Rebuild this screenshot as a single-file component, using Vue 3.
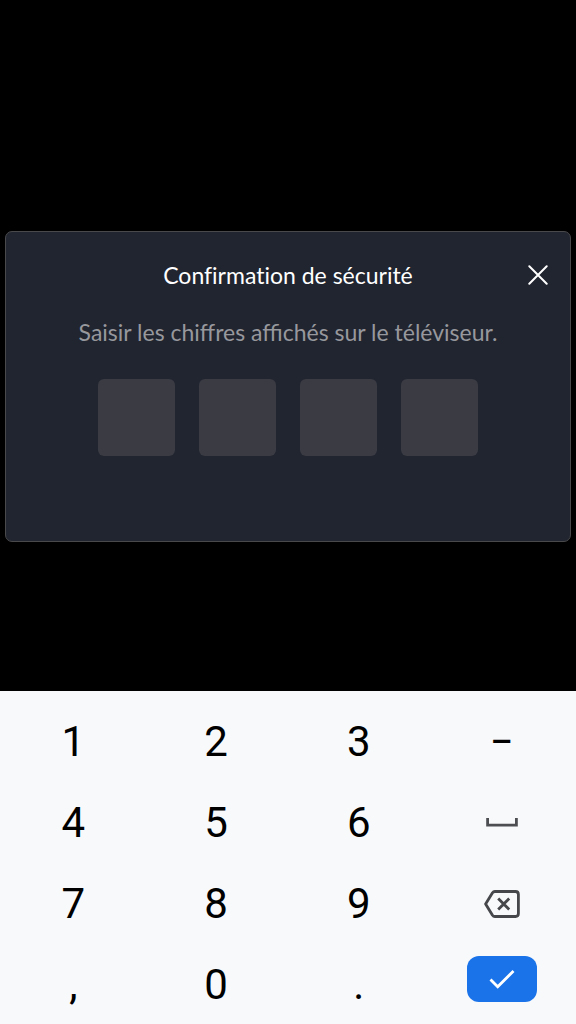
<template>
  <div class="screen">
    <main class="screen__stage">
      <section class="dialog" role="dialog" aria-labelledby="dialog-title">
        <header class="dialog__header">
          <h1 id="dialog-title" class="dialog__title">Confirmation de sécurité</h1>
          <button type="button" class="dialog__close" aria-label="Fermer" @click="clearCode">
            <svg width="20" height="20" viewBox="0 0 20 20" fill="none" stroke="#fff" stroke-width="2" stroke-linecap="round">
              <path d="M1.3 1.3 18.7 18.7M18.7 1.3 1.3 18.7" />
            </svg>
          </button>
        </header>
        <p class="dialog__text">Saisir les chiffres affichés sur le téléviseur.</p>
        <div class="dialog__code">
          <input
              v-for="(digit, index) in code"
              :key="index"
              type="text"
              inputmode="none"
              maxlength="1"
              readonly
              class="dialog__digit"
              :value="digit"
              :aria-label="`Chiffre ${index + 1}`"
          >
        </div>
      </section>
    </main>

    <div class="keyboard">
      <template v-for="key in keys" :key="key">
        <button v-if="key === 'space'" type="button" class="keyboard__key" aria-label="Espace">
          <svg width="32" height="10" viewBox="0 0 32 10" fill="none" stroke="#4d4e52" stroke-width="2.8">
            <path d="M1.6 0V7.2H30.4V0" />
          </svg>
        </button>
        <button v-else-if="key === 'delete'" type="button" class="keyboard__key" aria-label="Effacer" @click="removeDigit">
          <svg width="36" height="28" viewBox="0 0 36 28" fill="none" stroke="#46474a" stroke-width="2.8" stroke-linejoin="round">
            <path d="M10.8 1.5H31.5Q34.4 1.5 34.4 4.4V23.6Q34.4 26.5 31.5 26.5H10.8Q9.4 26.5 8.5 25.2L1.6 14 8.5 2.8Q9.4 1.5 10.8 1.5Z" />
            <path d="M14.2 8.5 25.2 19.5M25.2 8.5 14.2 19.5" />
          </svg>
        </button>
        <button v-else-if="key === 'enter'" type="button" class="keyboard__key keyboard__key--enter" aria-label="Valider">
          <span class="keyboard__enter">
            <svg width="26" height="20" viewBox="0 0 26 20" fill="none" stroke="#fff" stroke-width="2.8">
              <path d="M1.5 10.5 8.7 17.7 24.5 1.9" />
            </svg>
          </span>
        </button>
        <button v-else type="button" class="keyboard__key" @click="addDigit(key)">{{ key }}</button>
      </template>
    </div>
  </div>
</template>

<script setup>
import { ref } from 'vue';

const keys = ['1', '2', '3', '−', '4', '5', '6', 'space', '7', '8', '9', 'delete', ',', '0', '.', 'enter'];
const code = ref(['', '', '', '']);

const addDigit = (key) => {
  const index = code.value.indexOf('');
  if (/\d/.test(key) && index !== -1) {
    code.value[index] = key;
  }
};

const removeDigit = () => {
  const index = code.value.findLastIndex((digit) => digit !== '');
  if (index !== -1) {
    code.value[index] = '';
  }
};

const clearCode = () => {
  code.value = ['', '', '', ''];
};
</script>

<style>
body {
  margin: 0;
  background: #000;
}
</style>

<style scoped>
.screen {
  display: flex;
  flex-direction: column;
  min-height: 100vh;
  background: #000;
  font-family: Lato, "Noto Sans", sans-serif;
}

.screen__stage {
  display: flex;
  flex: 1;
  align-items: center;
  padding: 82px 5px 0;
}

.dialog {
  flex: 1;
  padding: 23px 20px 85px;
  border: 1px solid #49494c;
  border-radius: 7px;
  background: #21252f;
}

.dialog__header {
  display: grid;
  grid-template-columns: 40px 1fr 40px;
  align-items: center;
}

.dialog__title {
  grid-column: 2;
  margin: 0;
  color: #fff;
  font-size: 23px;
  font-weight: 400;
  font-variant-ligatures: none;
  line-height: 40px;
  text-align: center;
}

.dialog__close {
  display: flex;
  align-items: center;
  justify-content: flex-end;
  height: 40px;
  padding: 0 2px;
  border: none;
  background: none;
  cursor: pointer;
}

.dialog__text {
  margin: 21px 0 31px;
  color: #97989d;
  font-size: 23px;
  line-height: 32px;
  text-align: center;
}

.dialog__code {
  display: flex;
  justify-content: center;
  gap: 24px;
}

.dialog__digit {
  box-sizing: border-box;
  width: 77px;
  height: 77px;
  padding: 0;
  border: none;
  border-radius: 6px;
  background: #3a3b43;
  color: #fff;
  font-family: inherit;
  font-size: 36px;
  text-align: center;
}

.keyboard {
  display: grid;
  grid-template-columns: repeat(4, 1fr);
  grid-auto-rows: 81px;
  padding: 9px 3px 0 2px;
  background: #f8f9fb;
}

.keyboard__key {
  display: flex;
  align-items: center;
  justify-content: center;
  padding: 2px 0 0;
  border: none;
  background: none;
  color: #000;
  font-family: Roboto, sans-serif;
  font-size: 42px;
  line-height: 48px;
  cursor: pointer;
}

.keyboard__key--enter {
  align-items: flex-start;
}

.keyboard__enter {
  display: flex;
  align-items: center;
  justify-content: center;
  width: 70px;
  height: 46px;
  margin-top: 11px;
  border-radius: 12px;
  background: #1a73e8;
}
</style>
